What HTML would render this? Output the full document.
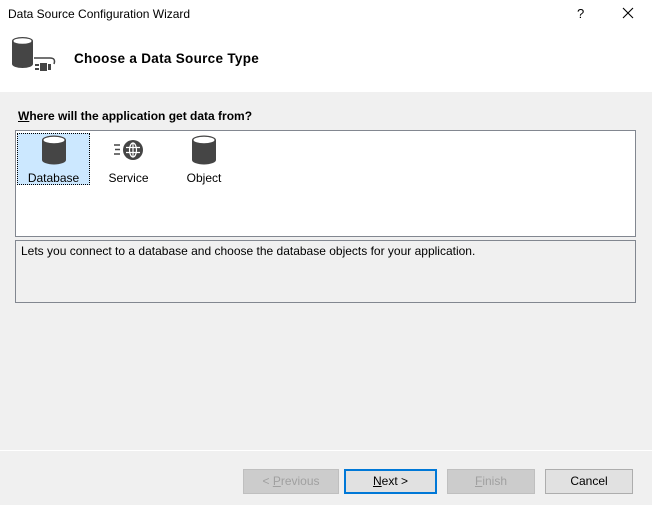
<!DOCTYPE html>
<html><head><meta charset="utf-8"><style>
*{margin:0;padding:0;box-sizing:border-box}
body{width:652px;height:505px;background:#f0f0f0;font-family:"Liberation Sans",sans-serif;font-size:12px;color:#000;position:relative;overflow:hidden}
.abs{position:absolute}
#hdr{left:0;top:0;width:652px;height:92px;background:#fff}
.btn{position:absolute;top:469px;height:25px;border:1px solid #adadad;background:#e1e1e1;text-align:center;line-height:23px;font-size:12px}
.dis{color:#a0a0a0;background:#cccccc;border-color:#bfbfbf}
u{text-decoration:underline}
</style></head><body>
<div id="hdr" class="abs"></div>
<div class="abs" style="left:8px;top:7px;font-size:12px">Data Source Configuration Wizard</div>
<div class="abs" style="left:577px;top:6px;font-size:13px">?</div>
<svg class="abs" style="left:622px;top:7px" width="12" height="12"><path d="M1 1L11 11M11 1L1 11" stroke="#000" stroke-width="1.1"/></svg>
<svg class="abs" style="left:10px;top:35px" width="50" height="40">
<path d="M2 6 a10.5 4 0 0 1 21 0 V29 a10.5 4 0 0 1 -21 0Z" fill="#454545"/>
<ellipse cx="12.5" cy="6" rx="9" ry="2.8" fill="#fff"/>
<path d="M24 23 H40 q6 0 4 6" fill="none" stroke="#454545" stroke-width="1.5"/>
<rect x="30" y="28" width="7" height="8" fill="#454545"/><rect x="25" y="29" width="4" height="2" fill="#454545"/><rect x="25" y="33" width="4" height="2" fill="#454545"/><rect x="38" y="29" width="3" height="6" fill="#454545"/>
</svg>
<div class="abs" style="left:74px;top:51px;font-size:13.5px;font-weight:bold;letter-spacing:0.3px">Choose a Data Source Type</div>
<div class="abs" style="left:0;top:450px;width:652px;height:1px;background:#fff"></div>
<div class="abs" style="left:18px;top:109px;font-weight:bold"><u>W</u>here will the application get data from?</div>
<div class="abs" style="left:15px;top:130px;width:621px;height:107px;background:#fff;border:1px solid #828790"></div>
<div class="abs" style="left:17px;top:133px;width:73px;height:52px;background:#cce8ff;border:1px dotted #000"></div>
<svg class="abs" style="left:41px;top:135px" width="26" height="31"><path d="M1 5 a12 4.5 0 0 1 24 0 V25 a12 4.5 0 0 1 -24 0Z" fill="#454545"/><ellipse cx="13" cy="5" rx="10.5" ry="3.2" fill="#fff"/></svg>
<div class="abs" style="left:17px;top:171px;width:73px;text-align:center">Database</div>
<svg class="abs" style="left:112px;top:139px" width="34" height="22"><path d="M2 6H8M3 10.5H8M2 15H8" stroke="#454545" stroke-width="1.6"/><circle cx="21" cy="11" r="10" fill="#454545"/><g stroke="#fff" stroke-width="1.2" fill="none"><ellipse cx="21" cy="11" rx="3.5" ry="7"/><path d="M21 4V18M14 8.5H28M14 13.5H28"/></g></svg>
<div class="abs" style="left:100px;top:171px;width:57px;text-align:center">Service</div>
<svg class="abs" style="left:191px;top:135px" width="26" height="31"><path d="M1 5 a12 4.5 0 0 1 24 0 V25 a12 4.5 0 0 1 -24 0Z" fill="#454545"/><ellipse cx="13" cy="5" rx="10.5" ry="3.2" fill="#fff"/></svg>
<div class="abs" style="left:176px;top:171px;width:56px;text-align:center">Object</div>
<div class="abs" style="left:15px;top:240px;width:621px;height:63px;border:1px solid #828790;background:#f0f0f0;padding:3px 5px">Lets you connect to a database and choose the database objects for your application.</div>
<div class="btn dis" style="left:243px;width:96px">&lt; <u>P</u>revious</div>
<div class="btn" style="left:344px;width:93px;border:2px solid #0078d7;line-height:21px"><u>N</u>ext &gt;</div>
<div class="btn dis" style="left:447px;width:88px"><u>F</u>inish</div>
<div class="btn" style="left:545px;width:88px">Cancel</div>
</body></html>
